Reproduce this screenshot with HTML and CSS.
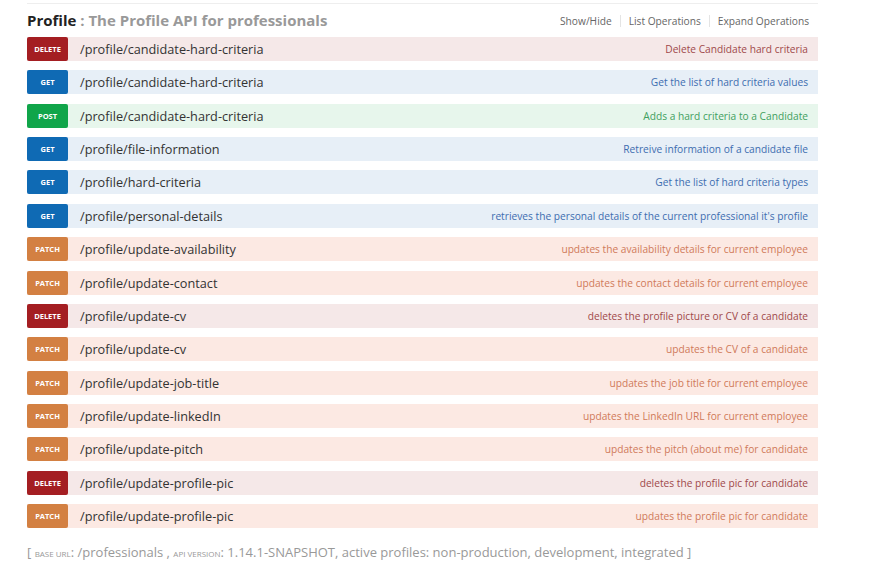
FILE: index.html
```html
<!DOCTYPE html>
<html>
<head>
<meta charset="utf-8">
<link rel="stylesheet" href="styles.css">
</head>
<body>
<div class="resource">
  <div class="heading">
    <h2 class="title"><span class="name">Profile</span><span class="sub"> : The Profile API for professionals</span></h2>
    <ul class="options">
      <li>Show/Hide</li>
      <li>List Operations</li>
      <li>Expand Operations</li>
    </ul>
  </div>
  <ul class="ops">
    <li class="op delete"><span class="verb">DELETE</span><span class="path">/profile/candidate-hard-criteria</span><span class="desc">Delete Candidate hard criteria</span></li>
    <li class="op get"><span class="verb">GET</span><span class="path">/profile/candidate-hard-criteria</span><span class="desc">Get the list of hard criteria values</span></li>
    <li class="op post"><span class="verb">POST</span><span class="path">/profile/candidate-hard-criteria</span><span class="desc">Adds a hard criteria to a Candidate</span></li>
    <li class="op get"><span class="verb">GET</span><span class="path">/profile/file-information</span><span class="desc">Retreive information of a candidate file</span></li>
    <li class="op get"><span class="verb">GET</span><span class="path">/profile/hard-criteria</span><span class="desc">Get the list of hard criteria types</span></li>
    <li class="op get"><span class="verb">GET</span><span class="path">/profile/personal-details</span><span class="desc">retrieves the personal details of the current professional it's profile</span></li>
    <li class="op patch"><span class="verb">PATCH</span><span class="path">/profile/update-availability</span><span class="desc">updates the availability details for current employee</span></li>
    <li class="op patch"><span class="verb">PATCH</span><span class="path">/profile/update-contact</span><span class="desc">updates the contact details for current employee</span></li>
    <li class="op delete"><span class="verb">DELETE</span><span class="path">/profile/update-cv</span><span class="desc">deletes the profile picture or CV of a candidate</span></li>
    <li class="op patch"><span class="verb">PATCH</span><span class="path">/profile/update-cv</span><span class="desc">updates the CV of a candidate</span></li>
    <li class="op patch"><span class="verb">PATCH</span><span class="path">/profile/update-job-title</span><span class="desc">updates the job title for current employee</span></li>
    <li class="op patch"><span class="verb">PATCH</span><span class="path">/profile/update-linkedIn</span><span class="desc">updates the LinkedIn URL for current employee</span></li>
    <li class="op patch"><span class="verb">PATCH</span><span class="path">/profile/update-pitch</span><span class="desc">updates the pitch (about me) for candidate</span></li>
    <li class="op delete"><span class="verb">DELETE</span><span class="path">/profile/update-profile-pic</span><span class="desc">deletes the profile pic for candidate</span></li>
    <li class="op patch"><span class="verb">PATCH</span><span class="path">/profile/update-profile-pic</span><span class="desc">updates the profile pic for candidate</span></li>
  </ul>
</div>
<div class="footer">[ <span class="small">BASE URL</span>: /professionals , <span class="small">API VERSION</span>: 1.14.1-SNAPSHOT, active profiles: non-production, development, integrated ]</div>
</body>
</html>
```
FILE: styles.css
```css
html, body { margin: 0; padding: 0; background: #fff; }
body { font-family: "Open Sans", "DejaVu Sans", sans-serif; padding: 3px 76px 0 27px; }
.resource { border-top: 1px solid #eeeeee; }
.heading { display: flex; justify-content: space-between; align-items: center; height: 33px; }
.title { margin: 0 0 2px; font-size: 15px; font-weight: 700; }
.title .name { color: #222; }
.title .sub { color: #999; }
.options { list-style: none; margin: 0; padding: 0 9px 0 0; display: flex; font-size: 10.2px; color: #666; }
.options li { padding: 0 8px; border-left: 1px solid #e4e4e4; line-height: 12px; }
.options li:first-child { border-left: none; }
.options li:last-child { padding-right: 0; }
.ops { list-style: none; margin: 0; padding: 0; display: flex; flex-direction: column; gap: 9.36px; }
.op { display: flex; align-items: center; height: 24px; }
.verb { width: 41px; height: 24px; display: flex; align-items: center; justify-content: center; color: #fff; font-size: 7.5px; font-weight: 700; border-radius: 2px; flex: none; }
.path { margin-left: 12px; font-size: 12.7px; color: #333; flex: 1; }
.desc { font-size: 10.2px; padding-right: 10px; }
.delete { background: #f5e8e8; }
.delete .verb { background: #a41e22; }
.delete .desc { color: #a0484a; }
.get { background: #e7eff7; }
.get .verb { background: #0f6ab4; }
.get .desc { color: #3d6db0; }
.post { background: #e7f6ec; }
.post .verb { background: #10a54a; }
.post .desc { color: #3fa060; }
.patch { background: #fce9e3; }
.patch .verb { background: #d38042; }
.patch .desc { color: #d07a5a; }
.footer { margin-top: 15px; font-size: 13px; color: #999; }
.footer .small { font-size: 8px; text-transform: uppercase; }
```
